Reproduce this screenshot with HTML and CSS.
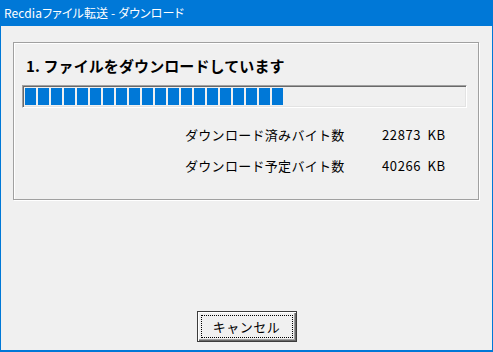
FILE: index.html
```html
<!DOCTYPE html>
<html lang="ja">
<head>
<meta charset="utf-8">
<title>Recdiaファイル転送 - ダウンロード</title>
<link rel="stylesheet" href="styles.css">
</head>
<body>
<div class="window">
  <div class="titlebar"><span class="title">Recdiaファイル転送 - ダウンロード</span></div>
  <div class="client">
    <div class="group">
      <div class="heading">1. ファイルをダウンロードしています</div>
      <div class="progress">
        <span class="block"></span><span class="block"></span><span class="block"></span><span class="block"></span><span class="block"></span>
        <span class="block"></span><span class="block"></span><span class="block"></span><span class="block"></span><span class="block"></span>
        <span class="block"></span><span class="block"></span><span class="block"></span><span class="block"></span><span class="block"></span>
        <span class="block"></span><span class="block"></span><span class="block"></span><span class="block"></span><span class="block"></span>
      </div>
      <div class="stats">
        <div class="row"><span class="label">ダウンロード済みバイト数</span><span class="value">22873 KB</span></div>
        <div class="row"><span class="label">ダウンロード予定バイト数</span><span class="value">40266 KB</span></div>
      </div>
    </div>
    <div class="spacer"></div>
    <div class="footer">
      <button class="button" type="button"><span class="focus">キャンセル</span></button>
    </div>
  </div>
</div>
</body>
</html>
```
FILE: styles.css
```css
html, body {
  margin: 0;
  padding: 0;
  background: #f0f0f0;
}
.window {
  width: 493px;
  height: 352px;
  box-sizing: border-box;
  background: #0078d7;
  display: flex;
  flex-direction: column;
  font-family: "Noto Sans CJK JP", "Noto Sans", sans-serif;
}
.titlebar {
  height: 26px;
  flex: none;
  display: flex;
  align-items: center;
  padding-left: 4px;
}
.title {
  color: #ffffff;
  font-size: 12px;
  font-feature-settings: "palt";
  line-height: 14px;
  margin-top: -1px;
  letter-spacing: 0.1px;
}
.client {
  flex: 1;
  margin: 0 1px 2px 1px;
  background: #f0f0f0;
  display: flex;
  flex-direction: column;
}
.group {
  margin: 16px 0 0 12px;
  width: 466px;
  height: 158px;
  box-sizing: border-box;
  border: 1px solid #a0a0a0;
  box-shadow: inset 1px 1px 0 #ffffff, 1px 1px 0 #ffffff;
  padding: 13px 0 0 11px;
}
.heading {
  font-size: 15px;
  line-height: 19px;
  font-weight: bold;
  color: #000;
  letter-spacing: 0.1px;
  margin-left: 1px;
}
.progress {
  margin: 10px 0 0 -3px;
  width: 445px;
  height: 23px;
  box-sizing: border-box;
  border-top: 1px solid #a0a0a0;
  border-left: 1px solid #a0a0a0;
  border-right: 1px solid #ffffff;
  border-bottom: 1px solid #ffffff;
  box-shadow: inset 1px 1px 0 #696969, inset -1px -1px 0 #e3e3e3;
  padding: 2px 2px;
  display: flex;
  gap: 2px;
}
.block {
  width: 11px;
  height: 17px;
  background: #0078d7;
  flex: none;
}
.stats {
  margin-top: 18px;
  display: flex;
  flex-direction: column;
  gap: 13px;
  padding-left: 160px;
}
.row {
  display: flex;
  font-size: 13px;
  line-height: 18px;
  color: #000;
}
.label {
  width: 197px;
  letter-spacing: 0.3px;
}
.value {
  letter-spacing: 0.6px;
  word-spacing: 3px;
}
.spacer {
  flex: 1;
}
.footer {
  display: flex;
  justify-content: center;
  padding-bottom: 8px;
}
.button {
  width: 100px;
  height: 31px;
  box-sizing: border-box;
  margin: 0;
  padding: 3px;
  background: #f0f0f0;
  border: 1px solid #3c3c3c;
  box-shadow: inset 1px 1px 0 #ffffff, inset -1px -1px 0 #696969, inset -2px -2px 0 #a0a0a0;
  border-radius: 0;
  font-family: "Noto Sans CJK JP", "Noto Sans", sans-serif;
  font-size: 13px;
  color: #000;
  display: flex;
}
.focus {
  flex: 1;
  border: 1px dotted #000;
  display: flex;
  align-items: center;
  justify-content: center;
  line-height: 16px;
  letter-spacing: 0.5px;
}
```
